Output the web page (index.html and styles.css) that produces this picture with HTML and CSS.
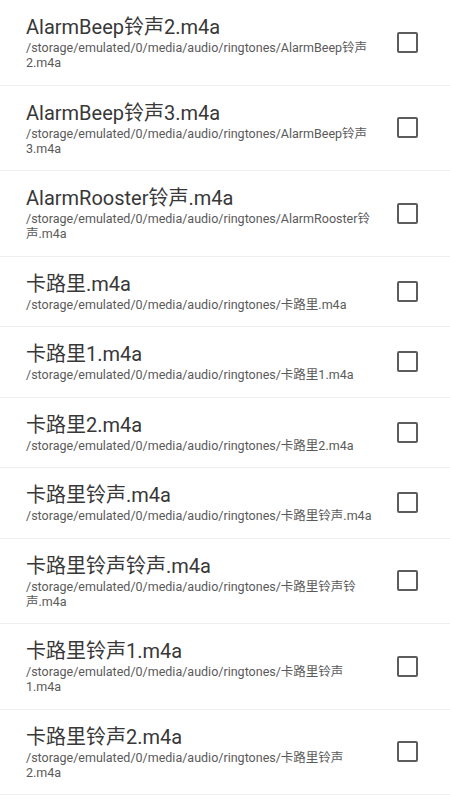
FILE: index.html
```html
<!DOCTYPE html>
<html lang="zh">
<head>
<meta charset="utf-8">
<link rel="stylesheet" href="styles.css">
</head>
<body>
<ul class="list">
  <li class="row"><div class="text"><div class="title">AlarmBeep铃声2.m4a</div><div class="path">/storage/emulated/0/media/audio/ringtones/AlarmBeep铃声2.m4a</div></div><span class="box"></span></li>
  <li class="row"><div class="text"><div class="title">AlarmBeep铃声3.m4a</div><div class="path">/storage/emulated/0/media/audio/ringtones/AlarmBeep铃声3.m4a</div></div><span class="box"></span></li>
  <li class="row"><div class="text"><div class="title">AlarmRooster铃声.m4a</div><div class="path">/storage/emulated/0/media/audio/ringtones/AlarmRooster铃声.m4a</div></div><span class="box"></span></li>
  <li class="row"><div class="text"><div class="title">卡路里.m4a</div><div class="path">/storage/emulated/0/media/audio/ringtones/卡路里.m4a</div></div><span class="box"></span></li>
  <li class="row"><div class="text"><div class="title">卡路里1.m4a</div><div class="path">/storage/emulated/0/media/audio/ringtones/卡路里1.m4a</div></div><span class="box"></span></li>
  <li class="row"><div class="text"><div class="title">卡路里2.m4a</div><div class="path">/storage/emulated/0/media/audio/ringtones/卡路里2.m4a</div></div><span class="box"></span></li>
  <li class="row"><div class="text"><div class="title">卡路里铃声.m4a</div><div class="path">/storage/emulated/0/media/audio/ringtones/卡路里铃声.m4a</div></div><span class="box"></span></li>
  <li class="row"><div class="text"><div class="title">卡路里铃声铃声.m4a</div><div class="path">/storage/emulated/0/media/audio/ringtones/卡路里铃声铃声.m4a</div></div><span class="box"></span></li>
  <li class="row"><div class="text"><div class="title">卡路里铃声1.m4a</div><div class="path">/storage/emulated/0/media/audio/ringtones/卡路里铃声1.m4a</div></div><span class="box"></span></li>
  <li class="row"><div class="text"><div class="title">卡路里铃声2.m4a</div><div class="path">/storage/emulated/0/media/audio/ringtones/卡路里铃声2.m4a</div></div><span class="box"></span></li>
</ul>
</body>
</html>
```
FILE: styles.css
```css
html, body {
  margin: 0;
  padding: 0;
  background: #ffffff;
}
body {
  font-family: Roboto, "Noto Sans CJK SC", sans-serif;
  overflow: hidden;
}
.list {
  list-style: none;
  margin: 0;
  padding: 0;
}
.row {
  display: flex;
  align-items: center;
  padding: 14px 0 14.5px 26px;
  border-bottom: 1px solid #efefef;
}
.text {
  flex: 1;
  min-width: 0;
}
.title {
  font-size: 20px;
  line-height: 26px;
  color: #383838;
}
.path {
  font-size: 12.5px;
  line-height: 15px;
  color: #5a5a5a;
}
.box {
  flex: none;
  width: 17px;
  height: 17px;
  border: 2.5px solid #5c5c5c;
  border-radius: 2px;
  margin: 0 32px 0 25px;
}
```
